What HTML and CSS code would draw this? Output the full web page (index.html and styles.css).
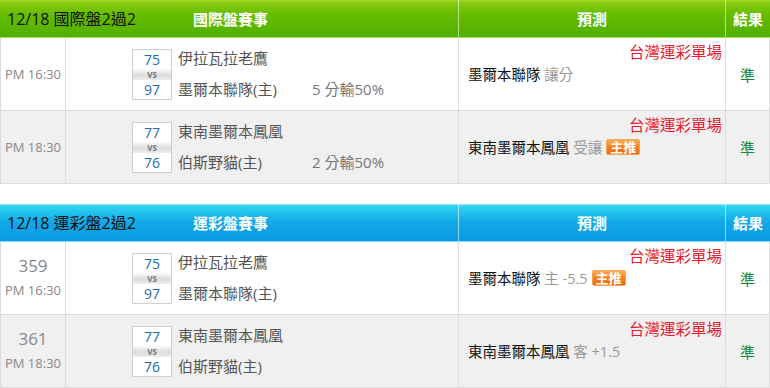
FILE: index.html
```html
<!DOCTYPE html>
<html lang="zh-Hant">
<head>
<meta charset="utf-8">
<title>賽事預測</title>
<link rel="stylesheet" href="styles.css">
</head>
<body>
<div class="board board-green">
  <div class="head">
    <div class="head-main"><span class="title">12/18 國際盤2過2</span><span class="label">國際盤賽事</span></div>
    <div class="head-cell">預測</div>
    <div class="head-cell">結果</div>
  </div>
  <div class="row">
    <div class="c-time"><div class="time">PM 16:30</div></div>
    <div class="c-match">
      <div class="score"><span class="pt">75</span><span class="vs">VS</span><span class="pt">97</span></div>
      <div class="teams">
        <div class="team">伊拉瓦拉老鷹</div>
        <div class="team"><span class="name">墨爾本聯隊(主)</span><span class="odds">5 分輸50%</span></div>
      </div>
    </div>
    <div class="c-pick"><div class="src">台灣運彩單場</div><div class="pick">墨爾本聯隊 <span class="muted">讓分</span></div></div>
    <div class="c-res">準</div>
  </div>
  <div class="row alt">
    <div class="c-time"><div class="time">PM 18:30</div></div>
    <div class="c-match">
      <div class="score"><span class="pt">77</span><span class="vs">VS</span><span class="pt">76</span></div>
      <div class="teams">
        <div class="team">東南墨爾本鳳凰</div>
        <div class="team"><span class="name">伯斯野貓(主)</span><span class="odds">2 分輸50%</span></div>
      </div>
    </div>
    <div class="c-pick"><div class="src">台灣運彩單場</div><div class="pick">東南墨爾本鳳凰 <span class="muted">受讓</span><span class="badge">主推</span></div></div>
    <div class="c-res">準</div>
  </div>
</div>

<div class="board board-blue">
  <div class="head">
    <div class="head-main"><span class="title">12/18 運彩盤2過2</span><span class="label">運彩盤賽事</span></div>
    <div class="head-cell">預測</div>
    <div class="head-cell">結果</div>
  </div>
  <div class="row">
    <div class="c-time"><div class="num">359</div><div class="time">PM 16:30</div></div>
    <div class="c-match">
      <div class="score"><span class="pt">75</span><span class="vs">VS</span><span class="pt">97</span></div>
      <div class="teams">
        <div class="team">伊拉瓦拉老鷹</div>
        <div class="team"><span class="name">墨爾本聯隊(主)</span></div>
      </div>
    </div>
    <div class="c-pick"><div class="src">台灣運彩單場</div><div class="pick">墨爾本聯隊 <span class="muted">主 -5.5</span><span class="badge">主推</span></div></div>
    <div class="c-res">準</div>
  </div>
  <div class="row alt">
    <div class="c-time"><div class="num">361</div><div class="time">PM 18:30</div></div>
    <div class="c-match">
      <div class="score"><span class="pt">77</span><span class="vs">VS</span><span class="pt">76</span></div>
      <div class="teams">
        <div class="team">東南墨爾本鳳凰</div>
        <div class="team"><span class="name">伯斯野貓(主)</span></div>
      </div>
    </div>
    <div class="c-pick"><div class="src">台灣運彩單場</div><div class="pick">東南墨爾本鳳凰 <span class="muted">客 +1.5</span></div></div>
    <div class="c-res">準</div>
  </div>
</div>
</body>
</html>
```

FILE: styles.css
```css
* { box-sizing: border-box; }
body {
  margin: 0;
  background: #fff;
  font-family: "Open Sans", "Noto Sans CJK TC", sans-serif;
  color: #555;
}
.board { width: 770px; }
.board + .board { margin-top: 20px; }

.head, .row {
  display: grid;
  grid-template-columns: 66px 393px 267px 44px;
}
.head {
  height: 38px;
  color: #fff;
  font-weight: bold;
  font-size: 15px;
}
.board-green .head {
  background: linear-gradient(#a6dc2a 0, #84cc0c 3px, #66bc00 40%, #50b000 100%);
  border-bottom: 1px solid #a2dc5a;
}
.board-blue .head {
  background: linear-gradient(#9ce8f8 0, #30d4f2 2px, #12a8e6 50%, #0a9ae2 100%);
  border-bottom: 1px solid #8cdcf2;
}
.head-main {
  grid-column: span 2;
  display: flex;
  align-items: center;
  line-height: 20px;
}
.head-main, .head-cell { border-right: 1px solid rgba(255,255,255,0.55); }
.head-cell:last-child { border-right: none; }
.title {
  width: 193px;
  padding-left: 7px;
  font-size: 16px;
  font-weight: normal;
  color: #111;
}
.head-cell {
  display: flex;
  align-items: center;
  justify-content: center;
  line-height: 20px;
}

.row {
  height: 73px;
  border-bottom: 1px solid #dcdcdc;
  background: #fff;
}
.row.alt { background: #f0f0f0; }
.row > div { border-right: 1px solid #dcdcdc; }
.c-time {
  border-left: 1px solid #dcdcdc;
  display: flex;
  flex-direction: column;
  align-items: center;
  justify-content: center;
  color: #888;
}
.time { font-size: 13px; line-height: 25px; }
.num { font-size: 17px; line-height: 25px; }

.c-match {
  display: flex;
  align-items: center;
  padding-left: 66px;
}
.score {
  width: 40px;
  display: flex;
  flex-direction: column;
  border: 1px solid #cfcfcf;
  background: #fff;
}
.pt {
  height: 19px;
  line-height: 19px;
  text-align: center;
  font-size: 14px;
  color: #1b6db0;
}
.vs {
  height: 11px;
  line-height: 11px;
  text-align: center;
  font-size: 8px;
  font-weight: bold;
  color: #777;
  background: linear-gradient(#fbfbfb, #dcdcdc 55%, #ececec);
}
.teams {
  margin-left: 6px;
  display: flex;
  flex-direction: column;
  gap: 12px;
}
.team {
  height: 19px;
  line-height: 19px;
  font-size: 15px;
  color: #555;
  white-space: nowrap;
}
.name { display: inline-block; width: 134px; }
.odds { color: #777; font-size: 15px; }

.c-pick { padding: 4px 3px 0 9px; }
.src {
  text-align: right;
  color: #e8192c;
  font-size: 15.5px;
  line-height: 20px;
}
.pick {
  margin-top: 3px;
  font-size: 14.5px;
  line-height: 20px;
  color: #111;
  white-space: nowrap;
}
.muted { color: #999; }
.badge {
  display: inline-block;
  vertical-align: 1px;
  margin-left: 4px;
  padding: 0 3px;
  height: 16px;
  line-height: 14px;
  font-size: 13px;
  font-weight: bold;
  color: #fff;
  border: 1px solid #f3a555;
  border-radius: 2px;
  background: linear-gradient(#ffae55, #f57e1c 55%, #ee6c10);
}
.c-res {
  display: flex;
  align-items: center;
  justify-content: center;
  color: #168a34;
  font-size: 15px;
}
```
